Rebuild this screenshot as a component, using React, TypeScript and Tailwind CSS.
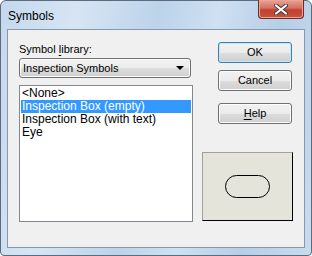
const ITEMS = ['<None>', 'Inspection Box (empty)', 'Inspection Box (with text)', 'Eye']
const SELECTED = 1

const ui = { fontFamily: '"Liberation Sans", Arial, sans-serif' }

function Button({ children, primary, className = '' }: { children: React.ReactNode; primary?: boolean; className?: string }) {
  return (
    <button
      className={
        'block w-[74px] h-[21px] rounded-[3px] border text-[11px] leading-none text-black ' +
        'bg-[linear-gradient(to_bottom,#f2f2f2_0%,#ebebeb_50%,#dddddd_51%,#cfcfcf_100%)] ' +
        (primary
          ? 'border-[#3c7fb1] shadow-[inset_0_0_0_1px_#bfe6f9] '
          : 'border-[#707070] shadow-[inset_0_0_0_1px_#fcfcfc] ') +
        className
      }
      style={ui}
    >
      {children}
    </button>
  )
}

export default function App() {
  return (
    <div className="w-[312px] h-[256px] overflow-hidden bg-white">
      <div className="w-[312px] h-[256px] flex flex-col rounded-t-[6px] rounded-b-[4px] border border-[#5d6b7c] bg-[linear-gradient(100deg,#c4d8ed_0%,#d7e5f3_22%,#bcd3ea_45%,#cfe0f1_62%,#b6cee7_80%,#c9dbee_100%)] px-[6px] pb-[7px]">
        {/* title bar */}
        <div className="h-[28px] flex items-start justify-between">
          <span className="mt-[9px] ml-[1px] text-[12px] leading-[13px] text-black" style={ui}>
            Symbols
          </span>
          <div className="w-[46px] h-[19px] -mt-px mr-px rounded-b-[4px] border border-[#6e2a23] border-t-0 bg-[linear-gradient(to_bottom,#e8a595_0%,#d46f5f_45%,#c2412f_55%,#c7523c_100%)] flex items-center justify-center shadow-[inset_0_0_0_1px_#e9a697]">
            <svg width="14" height="11" viewBox="0 0 14 11">
              <path d="M2 1.5 L12 9.5 M12 1.5 L2 9.5" stroke="#3d3d3d" strokeWidth="4" strokeLinecap="round" />
              <path d="M2 1.5 L12 9.5 M12 1.5 L2 9.5" stroke="#ffffff" strokeWidth="2.2" strokeLinecap="round" />
            </svg>
          </div>
        </div>

        {/* client area */}
        <div className="flex-1 border border-[#8698ad] bg-[#f0f0f0] flex pl-[11px]">
          <div className="w-[174px] flex flex-col pt-[12px]">
            <div className="h-[14px] text-[11px] leading-[14px] text-black" style={ui}>
              Symbol <span className="underline underline-offset-2">l</span>ibrary:
            </div>
            <div className="mt-[2px] w-[172px] h-[20px] rounded-[3px] border border-[#707070] bg-[linear-gradient(to_bottom,#f2f2f2_0%,#ebebeb_50%,#dddddd_51%,#cfcfcf_100%)] shadow-[inset_0_0_0_1px_#fcfcfc] flex items-center justify-between pl-[3px] pr-[6px]">
              <span className="text-[11px] leading-none text-black" style={ui}>
                Inspection Symbols
              </span>
              <svg width="8" height="4" viewBox="0 0 8 4">
                <path d="M0 0 H8 L4 4 Z" fill="#000" />
              </svg>
            </div>
            <div className="mt-[7px] h-[137px] border border-[#828790] bg-white pt-px px-px">
              {ITEMS.map((item, i) => (
                <div
                  key={item}
                  className={
                    'h-[13px] leading-[13px] text-[12px] pl-px whitespace-nowrap ' +
                    (i === SELECTED ? 'bg-[#3399ff] text-white' : 'text-black')
                  }
                  style={ui}
                >
                  {item}
                </div>
              ))}
            </div>
          </div>

          <div className="ml-[9px] w-[91px] flex flex-col items-end pt-[12px]">
            <Button primary className="mr-px">OK</Button>
            <Button className="mt-[7px] mr-px">Cancel</Button>
            <Button className="mt-[12px] mr-px">
              <span className="underline underline-offset-2">H</span>elp
            </Button>
            <div className="mt-[28px] w-[91px] h-[69px] border border-t-[#a0a0a0] border-l-[#a0a0a0] border-r-black border-b-black bg-[#e4e4db] flex items-center justify-center">
              <svg width="45" height="24" viewBox="0 0 45 24">
                <rect x="0.5" y="0.5" width="44" height="22" rx="11" fill="none" stroke="#000" strokeWidth="1" />
              </svg>
            </div>
          </div>
        </div>
      </div>
    </div>
  )
}
